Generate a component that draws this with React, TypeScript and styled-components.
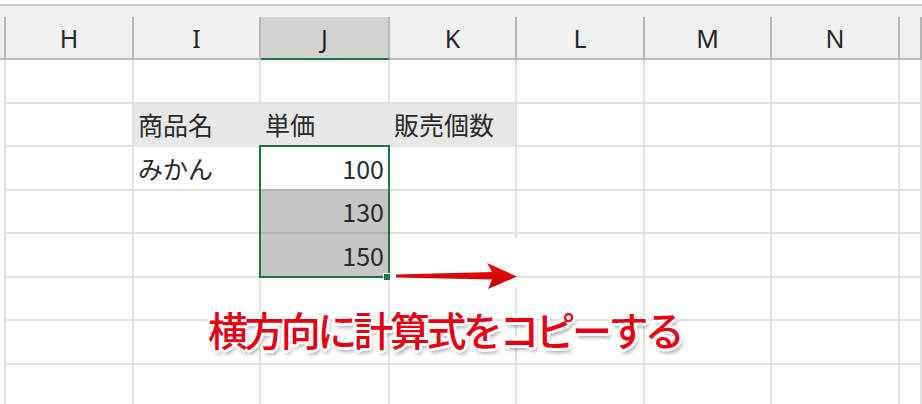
import React from "react";
import styled, { createGlobalStyle } from "styled-components";

const COLS = "4px 130px 127px 129px 127px 128px 127px 128px 1fr";
const GRID = "#e1e1e1";
const BAND = "#e7e7e7";
const SEL = "#c6c6c6";
const SEL_LINE = "#b2b2b2";
const GREEN = "#217346";

const GlobalStyle = createGlobalStyle`
  html, body { margin: 0; padding: 0; background: #ffffff; }
  body { overflow: hidden; font-family: "Noto Sans CJK JP", "Noto Sans", sans-serif; }
`;

const Sheet = styled.div`
  position: relative;
  width: 922px;
  height: 404px;
  overflow: hidden;
  background: #ffffff;
`;

const HeaderBand = styled.div`
  margin-top: 4px;
  border-top: 2px solid #c8c8c8;
  padding-top: 11px;
  background: #f0f0f0;
`;

const HeaderRow = styled.div`
  display: grid;
  grid-template-columns: ${COLS};
  height: 43px;
`;

const HeaderCell = styled.div<{ $first?: boolean; $selected?: boolean; $gutter?: boolean }>`
  box-sizing: border-box;
  display: flex;
  align-items: center;
  justify-content: center;
  background: ${(p) => (p.$selected ? "#d2d2d2" : "#f0f0f0")};
  border-bottom: 2px solid ${(p) => (p.$selected ? GREEN : "#bdbdbd")};
  border-right: ${(p) => (p.$gutter ? "none" : "2px solid #b4b4b4")};
  border-left: ${(p) => (p.$first ? "2px solid #b4b4b4" : "none")};
  font-family: "Noto Sans", "DejaVu Sans", sans-serif;
  font-size: 25px;
  color: #262626;
  line-height: 1;
  padding-top: 1px;
`;

const Body = styled.div`
  position: relative;
  display: grid;
  grid-template-columns: ${COLS};
  grid-template-rows: 44px 43px 44px 43px 44px 43px 44px 44px;
`;

const Gutter = styled.div``;

type Tone = "plain" | "band" | "bandEnd" | "active" | "sel";

const bgOf = (t: Tone) => (t === "band" || t === "bandEnd" ? BAND : t === "sel" ? SEL : "#ffffff");
const rightOf = (t: Tone) => (t === "band" ? BAND : GRID);
const bottomOf = (t: Tone) =>
  t === "band" || t === "bandEnd" ? BAND : t === "active" || t === "sel" ? SEL_LINE : GRID;

const Cell = styled.div<{ $first?: boolean; $tone: Tone; $right?: boolean }>`
  box-sizing: border-box;
  display: flex;
  align-items: center;
  justify-content: ${(p) => (p.$right ? "flex-end" : "flex-start")};
  padding: 0 ${(p) => (p.$right ? "4px" : "0")} 0 ${(p) => (p.$right ? "0" : "4px")};
  background: ${(p) => bgOf(p.$tone)};
  border-right: 2px solid ${(p) => rightOf(p.$tone)};
  border-bottom: 2px solid ${(p) => bottomOf(p.$tone)};
  border-left: ${(p) => (p.$first ? `2px solid ${GRID}` : "none")};
  font-family: "Noto Sans CJK JP", "Noto Sans", sans-serif;
  font-size: 25px;
  color: #2a2a2a;
  line-height: 1;
  white-space: nowrap;
  overflow: visible;
`;

const Selection = styled.div`
  grid-column: 4 / 5;
  grid-row: 3 / 6;
  position: absolute;
  top: -2px;
  left: -2px;
  right: 0;
  bottom: 0;
  border: 2px solid ${GREEN};
  pointer-events: none;
`;

const FillHandle = styled.div`
  position: absolute;
  right: -3px;
  bottom: -5px;
  width: 6px;
  height: 6px;
  background: ${GREEN};
  border: 1px solid #ffffff;
`;

const ArrowLayer = styled.svg`
  position: absolute;
  left: 388px;
  top: 232px;
  width: 134px;
  height: 62px;
  overflow: visible;
`;

const Callout = styled.div`
  position: absolute;
  left: 208px;
  top: 309px;
  font-family: "Noto Sans CJK JP", "Noto Sans", sans-serif;
  font-weight: 500;
  font-size: 40px;
  letter-spacing: -3.6px;
  line-height: 1;
  white-space: nowrap;
  color: #e50012;
  text-shadow: -2px -2px 0 #fff, 2px -2px 0 #fff, -2px 2px 0 #fff, 2px 2px 0 #fff,
    0 -3px 0 #fff, 0 3px 0 #fff, -3px 0 0 #fff, 3px 0 0 #fff,
    2px 4px 4px rgba(0, 0, 0, 0.45);
`;

type Spec = { text?: string; tone?: Tone; right?: boolean };

const COLUMN_LETTERS = ["H", "I", "J", "K", "L", "M", "N", ""];

const rows: Spec[][] = Array.from({ length: 8 }, () =>
  Array.from({ length: 8 }, () => ({} as Spec))
);
rows[1][1] = { text: "商品名", tone: "band" };
rows[1][2] = { text: "単価", tone: "band" };
rows[1][3] = { text: "販売個数", tone: "bandEnd" };
rows[2][1] = { text: "みかん" };
rows[2][2] = { text: "100", tone: "active", right: true };
rows[3][2] = { text: "130", tone: "sel", right: true };
rows[4][2] = { text: "150", tone: "sel", right: true };

export default function App() {
  return (
    <>
      <GlobalStyle />
      <Sheet>
        <HeaderBand>
          <HeaderRow>
            <HeaderCell $gutter />
            {COLUMN_LETTERS.map((l, i) => (
              <HeaderCell key={i} $first={i === 0} $selected={l === "J"}>
                {l}
              </HeaderCell>
            ))}
          </HeaderRow>
        </HeaderBand>
        <Body>
          {rows.map((r, ri) => (
            <React.Fragment key={ri}>
              <Gutter />
              {r.map((c, ci) => (
                <Cell key={ci} $first={ci === 0} $tone={c.tone ?? "plain"} $right={c.right}>
                  {c.text}
                </Cell>
              ))}
            </React.Fragment>
          ))}
          <Selection>
            <FillHandle />
          </Selection>
        </Body>
        <ArrowLayer viewBox="388 232 134 62">
          <defs>
            <linearGradient id="arrowRed" x1="0" y1="0" x2="0" y2="1">
              <stop offset="0" stopColor="#f01010" />
              <stop offset="1" stopColor="#c00000" />
            </linearGradient>
          </defs>
          <rect x="393" y="238" width="127" height="36" fill="#ffffff" />
          <rect x="393" y="274" width="124" height="14" fill="#ffffff" />
          <path
            d="M396 274.6 L492 272 L487 263 L517 276.5 L488 289 L492 279.5 L396 277.4 Z"
            fill="url(#arrowRed)"
          />
        </ArrowLayer>
        <Callout>横方向に計算式をコピーする</Callout>
      </Sheet>
    </>
  );
}
